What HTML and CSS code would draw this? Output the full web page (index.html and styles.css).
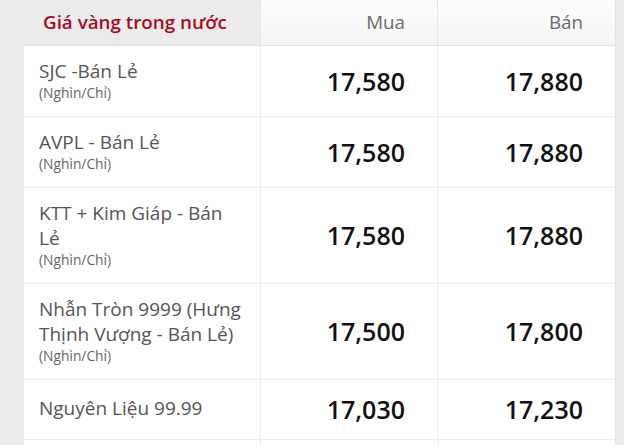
FILE: index.html
```html
<!DOCTYPE html>
<html lang="vi">
<head>
<meta charset="utf-8">
<title>Giá vàng trong nước</title>
<link rel="stylesheet" href="styles.css">
</head>
<body>
<div class="wrap">
  <table class="gold">
    <colgroup>
      <col class="c-name">
      <col class="c-buy">
      <col class="c-sell">
    </colgroup>
    <thead>
      <tr>
        <th class="h-name">Giá vàng trong nước</th>
        <th class="h-num h-buy">Mua</th>
        <th class="h-num h-sell">Bán</th>
      </tr>
    </thead>
    <tbody>
      <tr>
        <td class="name"><div class="n">SJC -Bán Lẻ</div><div class="u">(Nghìn/Chỉ)</div></td>
        <td class="num buy">17,580</td>
        <td class="num sell">17,880</td>
      </tr>
      <tr>
        <td class="name"><div class="n">AVPL - Bán Lẻ</div><div class="u">(Nghìn/Chỉ)</div></td>
        <td class="num buy">17,580</td>
        <td class="num sell">17,880</td>
      </tr>
      <tr>
        <td class="name"><div class="n">KTT + Kim Giáp - Bán Lẻ</div><div class="u">(Nghìn/Chỉ)</div></td>
        <td class="num buy">17,580</td>
        <td class="num sell">17,880</td>
      </tr>
      <tr>
        <td class="name"><div class="n">Nhẫn Tròn 9999 (Hưng Thịnh Vượng - Bán Lẻ)</div><div class="u">(Nghìn/Chỉ)</div></td>
        <td class="num buy">17,500</td>
        <td class="num sell">17,800</td>
      </tr>
      <tr>
        <td class="name"><div class="n">Nguyên Liệu 99.99</div></td>
        <td class="num buy">17,030</td>
        <td class="num sell">17,230</td>
      </tr>
      <tr>
        <td class="name"><div class="n">Nguyên Liệu 99.9</div></td>
        <td class="num buy">16,980</td>
        <td class="num sell">17,180</td>
      </tr>
    </tbody>
  </table>
</div>
</body>
</html>
```
FILE: styles.css
```css
html, body {
  margin: 0;
  padding: 0;
  background: #ebebeb;
  font-family: "Open Sans", "Noto Sans", sans-serif;
}

.wrap {
  padding-left: 24px;
}

.gold {
  border-collapse: separate;
  border-spacing: 0;
  table-layout: fixed;
  width: 592px;
}

.c-name { width: 237px; }
.c-buy { width: 177px; }
.c-sell { width: 178px; }

.gold th,
.gold td {
  box-sizing: border-box;
}

.gold th {
  height: 46px;
  font-size: 18.8px;
  line-height: 24px;
  vertical-align: middle;
  border-bottom: 1px solid #e3e3e3;
}

.h-name {
  text-align: left;
  padding: 0 0 2px 19px;
  color: #a30d1d;
  font-weight: 600;
  background: #ebebeb;
  border-right: 1px solid #e6e6e6;
}

.h-num {
  text-align: right;
  padding: 0 32px 2px 0;
  color: #6a6a6a;
  font-weight: 400;
  background: linear-gradient(#fdfdfd, #f5f5f5);
}

.h-buy { border-right: 1px solid #e6e6e6; }
.h-sell { border-right: 1px solid #e0e0e0; }

.gold td {
  background: #fff;
  border-bottom: 1px solid #ececec;
  vertical-align: middle;
}

.name {
  padding: 13px 15px 15px 15px;
  border-right: 1px solid #ececec;
}

.n {
  font-size: 19px;
  line-height: 25px;
  color: #555;
}

.u {
  font-size: 13.8px;
  line-height: 17px;
  color: #666;
}

.num {
  text-align: right;
  padding: 14px 32px 14px 0;
  font-size: 25px;
  line-height: 31px;
  font-weight: 600;
  color: #111;
}

.buy { border-right: 1px solid #ececec; }
.sell { border-right: 1px solid #e3e3e3; }
```
